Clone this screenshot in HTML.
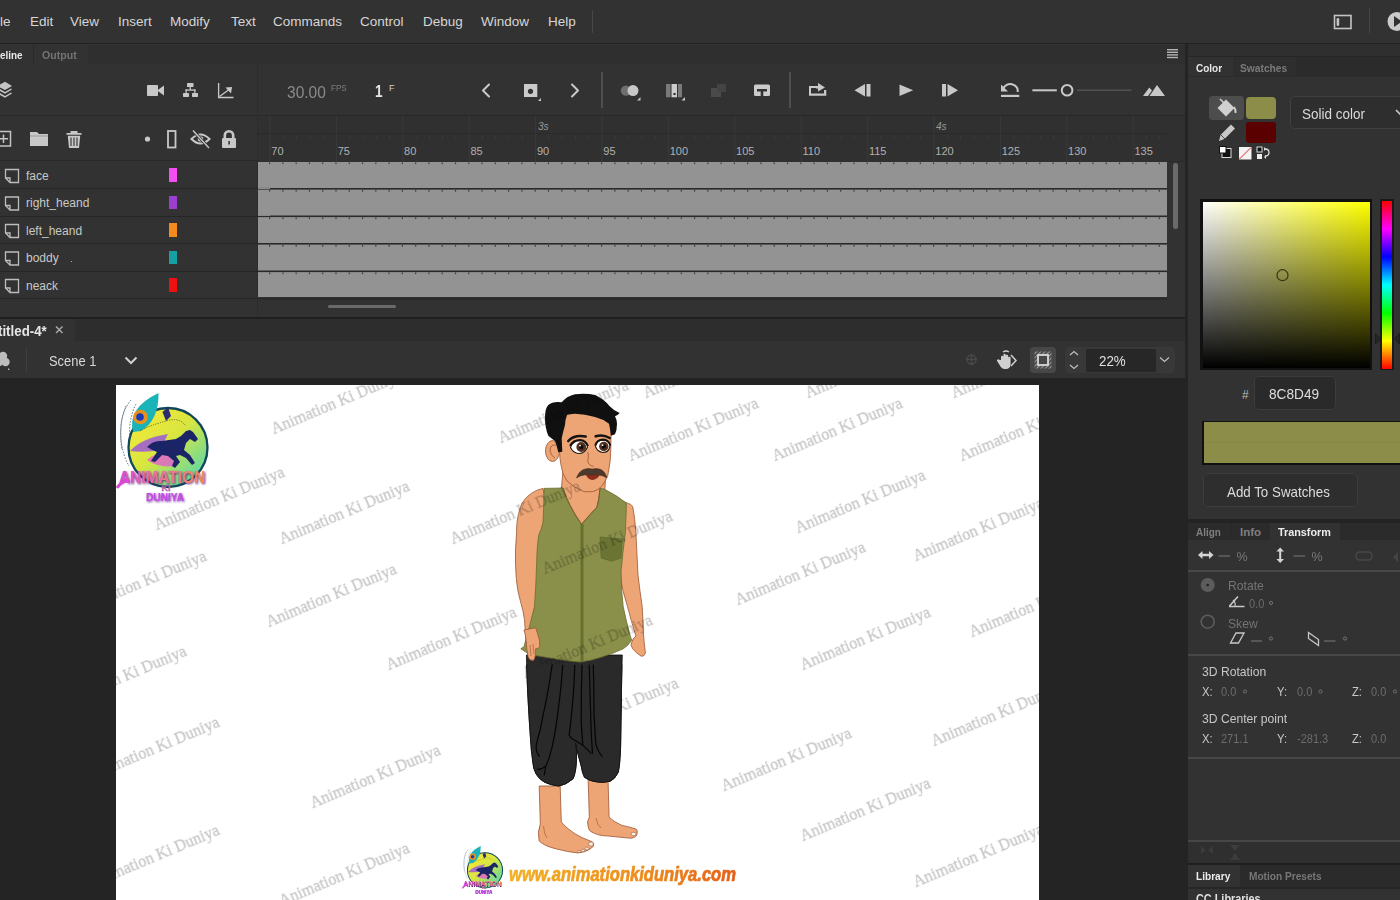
<!DOCTYPE html><html><head><meta charset="utf-8"><style>
*{margin:0;padding:0;box-sizing:border-box}
html,body{width:1400px;height:900px;overflow:hidden;background:#262626;font-family:"Liberation Sans",sans-serif;color:#cfcfcf}
.a{position:absolute}
.t{position:absolute;white-space:nowrap;line-height:1}
svg{position:absolute;overflow:visible}
.ic{fill:#c9c9c9}
.mn{top:15px;font-size:13.5px;color:#d6d6d6}
.rl{top:146px;font-size:11px;color:#b0b0b0}
.ln{font-size:12px;color:#c8c8c8}
.wm{position:absolute;white-space:nowrap;line-height:1;font-family:"Liberation Serif",serif;font-size:16px;color:rgba(0,0,0,0.2);-webkit-text-stroke:0.4px rgba(0,0,0,0.16);transform-origin:0 100%;transform:rotate(-22.8deg);will-change:transform}
</style></head><body><div class="a" style="left:0px;top:0px;width:1400px;height:43px;background:#323232;"></div>
<div class="t mn" style="left:0px">le</div>
<div class="t mn" style="left:30px">Edit</div>
<div class="t mn" style="left:70px">View</div>
<div class="t mn" style="left:118px">Insert</div>
<div class="t mn" style="left:170px">Modify</div>
<div class="t mn" style="left:231px">Text</div>
<div class="t mn" style="left:273px">Commands</div>
<div class="t mn" style="left:360px">Control</div>
<div class="t mn" style="left:423px">Debug</div>
<div class="t mn" style="left:481px">Window</div>
<div class="t mn" style="left:548px">Help</div>
<div class="a" style="left:592px;top:10px;width:1px;height:23px;background:#474747;"></div>
<div class="a" style="left:0px;top:43px;width:1400px;height:2px;background:#222222;"></div>
<svg style="left:0;top:0" width="1400" height="44"><rect x="1334.5" y="15.5" width="16.5" height="13" fill="none" stroke="#c4c4c4" stroke-width="1.6"/><rect x="1336.6" y="18" width="2.6" height="8" rx="1.3" fill="#c4c4c4"/><circle cx="1397" cy="21.5" r="9.5" fill="#cacaca"/><path d="M1394 16 L1402 21.5 L1394 27Z" fill="#323232"/></svg>
<div class="a" style="left:1369px;top:8px;width:1px;height:25px;background:#464646;"></div>
<div class="a" style="left:0px;top:44px;width:1185px;height:273px;background:#323232;"></div>
<div class="a" style="left:88px;top:45px;width:1097px;height:19px;background:#2f2f2f;"></div>
<div class="a" style="left:33px;top:44px;width:1px;height:20px;background:#2a2a2a;"></div>
<div class="t" style="left:-0.5px;top:49.5px;font-size:11.5px;color:#e8e8e8;font-weight:bold;transform:scaleX(0.86);transform-origin:0 0">eline</div>
<div class="t" style="left:42px;top:49.5px;font-size:11.5px;color:#737373;font-weight:bold;transform:scaleX(0.92);transform-origin:0 0">Output</div>
<svg style="left:0;top:0" width="1" height="1"><g fill="#b4b4b4"><rect x="1167" y="49" width="11" height="1.4"/><rect x="1167" y="51.6" width="11" height="1.4"/><rect x="1167" y="54.2" width="11" height="1.4"/><rect x="1167" y="56.8" width="11" height="1.4"/></g></svg>
<div class="a" style="left:0px;top:115px;width:1185px;height:1px;background:#2a2a2a;"></div>
<div class="a" style="left:0px;top:160px;width:258px;height:1px;background:#2a2a2a;"></div>
<div class="a" style="left:257px;top:64px;width:1px;height:253px;background:#2c2c2c;"></div>
<svg style="left:0;top:0" width="1" height="1"><g fill="#c4c4c4"><path d="M-3 86 L5 81.8 L12 86 L5 90Z"/><path d="M-3 89.5 L-1 88.5 L5 92 L11 88.5 L12 89.5 L5 93.8Z"/><path d="M-3 93.5 L-1 92.5 L5 96 L11 92.5 L12 93.5 L5 97.8Z"/></g></svg>
<svg style="left:0;top:0" width="1" height="1"><g fill="#c8c8c8"><rect x="147" y="85" width="11" height="11" rx="0.8"/><path d="M157 90.5 L164 85.5 L164 95.5Z"/><rect x="187" y="83" width="6.5" height="4" rx="0.6"/><rect x="189.6" y="86.5" width="1.3" height="3.5"/><rect x="185.5" y="89.4" width="10" height="1.3"/><rect x="185.5" y="89.4" width="1.3" height="3.5"/><rect x="194.2" y="89.4" width="1.3" height="3.5"/><rect x="183" y="92.9" width="6" height="4" rx="0.6"/><rect x="192" y="92.9" width="6" height="4" rx="0.6"/></g><g stroke="#c8c8c8" stroke-width="1.3" fill="none"><path d="M218.6 83 V97.5 H233.5"/><path d="M219.5 96.5 L230.5 88.5"/></g><path d="M225.5 87.5 L232 87 L231 93.5Z" fill="#c8c8c8"/></svg>
<div class="t" style="left:287px;top:84px;font-size:16.5px;color:#8a8a8a;transform:scaleX(0.94);transform-origin:0 0">30.00</div>
<div class="t" style="left:331px;top:83.5px;font-size:9px;color:#7d7d7d;transform:scaleX(0.9);transform-origin:0 0">FPS</div>
<div class="t" style="left:375px;top:84px;font-size:16px;color:#e6e6e6;font-weight:bold;transform:scaleX(0.85);transform-origin:0 0">1</div>
<div class="t" style="left:389px;top:83.5px;font-size:9px;color:#d0d0d0;">F</div>
<svg style="left:0;top:0" width="1" height="1"><g stroke="#cacaca" stroke-width="2" fill="none" stroke-linecap="round" stroke-linejoin="round"><path d="M489 84.5 L483 90.5 L489 96.5"/><path d="M572 84.5 L578 90.5 L572 96.5"/></g><rect x="524" y="84" width="13.3" height="13" fill="#cacaca"/><circle cx="530.5" cy="91.3" r="2.6" fill="#323232"/><path d="M541 98 L541 101 L538 101Z" fill="#cacaca"/></svg>
<div class="a" style="left:601px;top:72px;width:1.5px;height:36px;background:#4f4f4f;"></div>
<svg style="left:0;top:0" width="1" height="1"><circle cx="626" cy="90.6" r="5.2" fill="#6f6f6f"/><circle cx="633" cy="90.6" r="5.5" fill="#c8c8c8"/><path d="M640.5 97 L640.5 100.5 L637 100.5Z" fill="#c8c8c8"/><rect x="666" y="84" width="4.5" height="13.3" fill="#7a7a7a"/><rect x="671.5" y="84" width="5.5" height="13.3" fill="#cccccc"/><rect x="678" y="84" width="4" height="13.3" fill="#7a7a7a"/><rect x="673.5" y="93" width="2" height="2" fill="#222"/><path d="M685 97 L685 100.5 L681.5 100.5Z" fill="#c8c8c8"/><rect x="711" y="88" width="10" height="9" fill="#4a4a4a"/><rect x="717" y="84" width="9" height="8" fill="#444"/><rect x="754" y="84.5" width="16" height="11.5" rx="1.5" fill="#cccccc"/><path d="M757 89 H767 V91.5 H763.3 V96 H760.7 V91.5 H757Z" fill="#323232"/></svg>
<div class="a" style="left:789px;top:72px;width:1.5px;height:36px;background:#4f4f4f;"></div>
<svg style="left:0;top:0" width="1" height="1"><g fill="#c8c8c8"><path d="M809 86 H819 V88 H811 V93.5 H824 V90 H826.3 V95.7 H809Z"/><path d="M818 83 L825 87.5 L818 91.5Z"/><rect x="816" y="86.5" width="4" height="2"/><path d="M865 84 L865 96.5 L854.5 90.2Z"/><rect x="866.5" y="84" width="4" height="12.5"/><path d="M899.5 84.4 L913.2 90.2 L899.5 96Z"/><rect x="942" y="84" width="4" height="12.5"/><path d="M947.5 84 L947.5 96.5 L958 90.2Z"/></g></svg>
<svg style="left:0;top:0" width="1" height="1"><path d="M1003 89 A7 6 0 1 1 1017.5 92" stroke="#c8c8c8" stroke-width="2" fill="none"/><path d="M1001 84.5 L1001 91.5 L1008 91.5Z" fill="#c8c8c8"/><rect x="1001" y="94.8" width="18.3" height="2.2" fill="#c8c8c8"/><rect x="1032.4" y="89.3" width="24.4" height="2" fill="#c8c8c8"/><circle cx="1067.1" cy="90.3" r="5.3" stroke="#c8c8c8" stroke-width="2" fill="none"/><rect x="1077" y="89.5" width="54.4" height="1.4" fill="#555"/><path d="M1143 96 L1149.3 87.5 L1152 90.5 L1148 96Z" fill="#c8c8c8"/><path d="M1149.5 96 L1157 85 L1165 96Z" fill="#c8c8c8"/></svg>
<svg style="left:0;top:0" width="1" height="1"><rect x="-4" y="131.5" width="14.5" height="14.5" fill="none" stroke="#c4c4c4" stroke-width="1.5"/><path d="M3.5 134.5 V143 M-1 138.8 H8" stroke="#c4c4c4" stroke-width="1.5"/><path d="M30 132 H37 L39 134 H48 V146 H30Z" fill="#c8c8c8"/><rect x="30" y="135.5" width="18" height="1" fill="#9a9a9a"/><path d="M66.5 133 H81.5 V134.8 H66.5Z M70.5 131 H77.5 V133 H70.5Z" fill="#c8c8c8"/><path d="M67.8 135.8 H80.2 L79 148 H69Z" fill="#c8c8c8"/><path d="M71 137.5 V146 M74 137.5 V146 M77 137.5 V146" stroke="#323232" stroke-width="1.1"/><circle cx="147.5" cy="139" r="2.6" fill="#c8c8c8"/><rect x="168" y="131" width="7.5" height="16.5" fill="none" stroke="#c8c8c8" stroke-width="1.8"/><path d="M191.5 139 Q200.5 130 209.5 139 Q200.5 148 191.5 139Z" fill="none" stroke="#c8c8c8" stroke-width="2"/><circle cx="200.5" cy="139" r="2.8" fill="#c8c8c8"/><path d="M193 130.5 L209 148" stroke="#323232" stroke-width="3"/><path d="M193 130.5 L209 148" stroke="#c8c8c8" stroke-width="1.4"/><path d="M224.8 138 V135.5 A4.2 4.2 0 0 1 233.2 135.5 V138" fill="none" stroke="#c8c8c8" stroke-width="2.6"/><rect x="222" y="138" width="14" height="10" rx="1" fill="#c8c8c8"/><rect x="228.3" y="141" width="1.6" height="3.5" fill="#323232"/></svg>
<div class="a" style="left:258px;top:116px;width:927px;height:46px;background:#303030;"></div>
<svg style="left:0;top:0" width="1" height="1"><rect x="269.50" y="116" width="1" height="46" fill="#3a3a3a"/><rect x="282.78" y="135.5" width="1" height="4" fill="#3a3a3a"/><rect x="296.06" y="135.5" width="1" height="4" fill="#3a3a3a"/><rect x="309.34" y="135.5" width="1" height="4" fill="#3a3a3a"/><rect x="322.62" y="135.5" width="1" height="4" fill="#3a3a3a"/><rect x="335.90" y="116" width="1" height="46" fill="#3a3a3a"/><rect x="349.18" y="135.5" width="1" height="4" fill="#3a3a3a"/><rect x="362.46" y="135.5" width="1" height="4" fill="#3a3a3a"/><rect x="375.74" y="135.5" width="1" height="4" fill="#3a3a3a"/><rect x="389.02" y="135.5" width="1" height="4" fill="#3a3a3a"/><rect x="402.30" y="116" width="1" height="46" fill="#3a3a3a"/><rect x="415.58" y="135.5" width="1" height="4" fill="#3a3a3a"/><rect x="428.86" y="135.5" width="1" height="4" fill="#3a3a3a"/><rect x="442.14" y="135.5" width="1" height="4" fill="#3a3a3a"/><rect x="455.42" y="135.5" width="1" height="4" fill="#3a3a3a"/><rect x="468.70" y="116" width="1" height="46" fill="#3a3a3a"/><rect x="481.98" y="135.5" width="1" height="4" fill="#3a3a3a"/><rect x="495.26" y="135.5" width="1" height="4" fill="#3a3a3a"/><rect x="508.54" y="135.5" width="1" height="4" fill="#3a3a3a"/><rect x="521.82" y="135.5" width="1" height="4" fill="#3a3a3a"/><rect x="535.10" y="116" width="1" height="46" fill="#3a3a3a"/><rect x="548.38" y="135.5" width="1" height="4" fill="#3a3a3a"/><rect x="561.66" y="135.5" width="1" height="4" fill="#3a3a3a"/><rect x="574.94" y="135.5" width="1" height="4" fill="#3a3a3a"/><rect x="588.22" y="135.5" width="1" height="4" fill="#3a3a3a"/><rect x="601.50" y="116" width="1" height="46" fill="#3a3a3a"/><rect x="614.78" y="135.5" width="1" height="4" fill="#3a3a3a"/><rect x="628.06" y="135.5" width="1" height="4" fill="#3a3a3a"/><rect x="641.34" y="135.5" width="1" height="4" fill="#3a3a3a"/><rect x="654.62" y="135.5" width="1" height="4" fill="#3a3a3a"/><rect x="667.90" y="116" width="1" height="46" fill="#3a3a3a"/><rect x="681.18" y="135.5" width="1" height="4" fill="#3a3a3a"/><rect x="694.46" y="135.5" width="1" height="4" fill="#3a3a3a"/><rect x="707.74" y="135.5" width="1" height="4" fill="#3a3a3a"/><rect x="721.02" y="135.5" width="1" height="4" fill="#3a3a3a"/><rect x="734.30" y="116" width="1" height="46" fill="#3a3a3a"/><rect x="747.58" y="135.5" width="1" height="4" fill="#3a3a3a"/><rect x="760.86" y="135.5" width="1" height="4" fill="#3a3a3a"/><rect x="774.14" y="135.5" width="1" height="4" fill="#3a3a3a"/><rect x="787.42" y="135.5" width="1" height="4" fill="#3a3a3a"/><rect x="800.70" y="116" width="1" height="46" fill="#3a3a3a"/><rect x="813.98" y="135.5" width="1" height="4" fill="#3a3a3a"/><rect x="827.26" y="135.5" width="1" height="4" fill="#3a3a3a"/><rect x="840.54" y="135.5" width="1" height="4" fill="#3a3a3a"/><rect x="853.82" y="135.5" width="1" height="4" fill="#3a3a3a"/><rect x="867.10" y="116" width="1" height="46" fill="#3a3a3a"/><rect x="880.38" y="135.5" width="1" height="4" fill="#3a3a3a"/><rect x="893.66" y="135.5" width="1" height="4" fill="#3a3a3a"/><rect x="906.94" y="135.5" width="1" height="4" fill="#3a3a3a"/><rect x="920.22" y="135.5" width="1" height="4" fill="#3a3a3a"/><rect x="933.50" y="116" width="1" height="46" fill="#3a3a3a"/><rect x="946.78" y="135.5" width="1" height="4" fill="#3a3a3a"/><rect x="960.06" y="135.5" width="1" height="4" fill="#3a3a3a"/><rect x="973.34" y="135.5" width="1" height="4" fill="#3a3a3a"/><rect x="986.62" y="135.5" width="1" height="4" fill="#3a3a3a"/><rect x="999.90" y="116" width="1" height="46" fill="#3a3a3a"/><rect x="1013.18" y="135.5" width="1" height="4" fill="#3a3a3a"/><rect x="1026.46" y="135.5" width="1" height="4" fill="#3a3a3a"/><rect x="1039.74" y="135.5" width="1" height="4" fill="#3a3a3a"/><rect x="1053.02" y="135.5" width="1" height="4" fill="#3a3a3a"/><rect x="1066.30" y="116" width="1" height="46" fill="#3a3a3a"/><rect x="1079.58" y="135.5" width="1" height="4" fill="#3a3a3a"/><rect x="1092.86" y="135.5" width="1" height="4" fill="#3a3a3a"/><rect x="1106.14" y="135.5" width="1" height="4" fill="#3a3a3a"/><rect x="1119.42" y="135.5" width="1" height="4" fill="#3a3a3a"/><rect x="1132.70" y="116" width="1" height="46" fill="#3a3a3a"/><rect x="1145.98" y="135.5" width="1" height="4" fill="#3a3a3a"/><rect x="1159.26" y="135.5" width="1" height="4" fill="#3a3a3a"/></svg>
<div class="a" style="left:258px;top:133px;width:909px;height:1px;background:#2a2a2a;"></div>
<div class="t rl" style="left:271.3px">70</div>
<div class="t rl" style="left:337.7px">75</div>
<div class="t rl" style="left:404.1px">80</div>
<div class="t rl" style="left:470.5px">85</div>
<div class="t rl" style="left:536.9px">90</div>
<div class="t rl" style="left:603.3px">95</div>
<div class="t rl" style="left:669.7px">100</div>
<div class="t rl" style="left:736.1px">105</div>
<div class="t rl" style="left:802.5px">110</div>
<div class="t rl" style="left:868.9px">115</div>
<div class="t rl" style="left:935.3px">120</div>
<div class="t rl" style="left:1001.7px">125</div>
<div class="t rl" style="left:1068.1px">130</div>
<div class="t rl" style="left:1134.5px">135</div>
<div class="t" style="left:538px;top:122px;font-size:10px;color:#9a9a9a;font-style:italic">3s</div>
<div class="t" style="left:936px;top:122px;font-size:10px;color:#9a9a9a;font-style:italic">4s</div>
<div class="a" style="left:0px;top:188px;width:258px;height:1.3px;background:#262626;"></div>
<svg style="left:0;top:0" width="1" height="1"><path d="M5.5 169.5 H18.5 V182.5 H10 L5.5 178Z" fill="none" stroke="#bdbdbd" stroke-width="1.3"/><path d="M5.5 178 H10 V182.5" fill="none" stroke="#bdbdbd" stroke-width="1.3"/></svg>
<div class="t" style="left:26px;top:169.5px;font-size:12px;color:#c8c8c8;">face</div>
<div class="a" style="left:169px;top:168px;width:7.5px;height:13.5px;background:#f34ef3;"></div>
<div class="a" style="left:0px;top:215.5px;width:258px;height:1.3px;background:#262626;"></div>
<svg style="left:0;top:0" width="1" height="1"><path d="M5.5 197.0 H18.5 V210.0 H10 L5.5 205.5Z" fill="none" stroke="#bdbdbd" stroke-width="1.3"/><path d="M5.5 205.5 H10 V210.0" fill="none" stroke="#bdbdbd" stroke-width="1.3"/></svg>
<div class="t" style="left:26px;top:197.0px;font-size:12px;color:#c8c8c8;">right_heand</div>
<div class="a" style="left:169px;top:195.5px;width:7.5px;height:13.5px;background:#9b3fd0;"></div>
<div class="a" style="left:0px;top:243px;width:258px;height:1.3px;background:#262626;"></div>
<svg style="left:0;top:0" width="1" height="1"><path d="M5.5 224.5 H18.5 V237.5 H10 L5.5 233Z" fill="none" stroke="#bdbdbd" stroke-width="1.3"/><path d="M5.5 233 H10 V237.5" fill="none" stroke="#bdbdbd" stroke-width="1.3"/></svg>
<div class="t" style="left:26px;top:224.5px;font-size:12px;color:#c8c8c8;">left_heand</div>
<div class="a" style="left:169px;top:223px;width:7.5px;height:13.5px;background:#f38a1d;"></div>
<div class="a" style="left:0px;top:270.5px;width:258px;height:1.3px;background:#262626;"></div>
<svg style="left:0;top:0" width="1" height="1"><path d="M5.5 252.0 H18.5 V265.0 H10 L5.5 260.5Z" fill="none" stroke="#bdbdbd" stroke-width="1.3"/><path d="M5.5 260.5 H10 V265.0" fill="none" stroke="#bdbdbd" stroke-width="1.3"/></svg>
<div class="t" style="left:26px;top:252.0px;font-size:12px;color:#c8c8c8;">boddy</div>
<div class="a" style="left:169px;top:250.5px;width:7.5px;height:13.5px;background:#16a0a3;"></div>
<div class="a" style="left:0px;top:298px;width:258px;height:1.3px;background:#262626;"></div>
<svg style="left:0;top:0" width="1" height="1"><path d="M5.5 279.5 H18.5 V292.5 H10 L5.5 288Z" fill="none" stroke="#bdbdbd" stroke-width="1.3"/><path d="M5.5 288 H10 V292.5" fill="none" stroke="#bdbdbd" stroke-width="1.3"/></svg>
<div class="t" style="left:26px;top:279.5px;font-size:12px;color:#c8c8c8;">neack</div>
<div class="a" style="left:169px;top:278px;width:7.5px;height:13.5px;background:#ee1111;"></div>
<div class="a" style="left:70.5px;top:260.5px;width:1.5px;height:1.5px;background:#aaa;"></div>
<div class="a" style="left:258px;top:162px;width:909px;height:135px;background:#939393;"></div>
<svg style="left:0;top:0" width="1" height="1"><rect x="258" y="188" width="909" height="1.6" fill="#2a2a2a"/><rect x="269.00" y="162.5" width="1.2" height="1.6" fill="#3a3a3a"/><rect x="282.28" y="162.5" width="1.2" height="1.6" fill="#3a3a3a"/><rect x="295.56" y="162.5" width="1.2" height="1.6" fill="#3a3a3a"/><rect x="308.84" y="162.5" width="1.2" height="1.6" fill="#3a3a3a"/><rect x="322.12" y="162.5" width="1.2" height="1.6" fill="#3a3a3a"/><rect x="335.40" y="162.5" width="1.2" height="1.6" fill="#3a3a3a"/><rect x="348.68" y="162.5" width="1.2" height="1.6" fill="#3a3a3a"/><rect x="361.96" y="162.5" width="1.2" height="1.6" fill="#3a3a3a"/><rect x="375.24" y="162.5" width="1.2" height="1.6" fill="#3a3a3a"/><rect x="388.52" y="162.5" width="1.2" height="1.6" fill="#3a3a3a"/><rect x="401.80" y="162.5" width="1.2" height="1.6" fill="#3a3a3a"/><rect x="415.08" y="162.5" width="1.2" height="1.6" fill="#3a3a3a"/><rect x="428.36" y="162.5" width="1.2" height="1.6" fill="#3a3a3a"/><rect x="441.64" y="162.5" width="1.2" height="1.6" fill="#3a3a3a"/><rect x="454.92" y="162.5" width="1.2" height="1.6" fill="#3a3a3a"/><rect x="468.20" y="162.5" width="1.2" height="1.6" fill="#3a3a3a"/><rect x="481.48" y="162.5" width="1.2" height="1.6" fill="#3a3a3a"/><rect x="494.76" y="162.5" width="1.2" height="1.6" fill="#3a3a3a"/><rect x="508.04" y="162.5" width="1.2" height="1.6" fill="#3a3a3a"/><rect x="521.32" y="162.5" width="1.2" height="1.6" fill="#3a3a3a"/><rect x="534.60" y="162.5" width="1.2" height="1.6" fill="#3a3a3a"/><rect x="547.88" y="162.5" width="1.2" height="1.6" fill="#3a3a3a"/><rect x="561.16" y="162.5" width="1.2" height="1.6" fill="#3a3a3a"/><rect x="574.44" y="162.5" width="1.2" height="1.6" fill="#3a3a3a"/><rect x="587.72" y="162.5" width="1.2" height="1.6" fill="#3a3a3a"/><rect x="601.00" y="162.5" width="1.2" height="1.6" fill="#3a3a3a"/><rect x="614.28" y="162.5" width="1.2" height="1.6" fill="#3a3a3a"/><rect x="627.56" y="162.5" width="1.2" height="1.6" fill="#3a3a3a"/><rect x="640.84" y="162.5" width="1.2" height="1.6" fill="#3a3a3a"/><rect x="654.12" y="162.5" width="1.2" height="1.6" fill="#3a3a3a"/><rect x="667.40" y="162.5" width="1.2" height="1.6" fill="#3a3a3a"/><rect x="680.68" y="162.5" width="1.2" height="1.6" fill="#3a3a3a"/><rect x="693.96" y="162.5" width="1.2" height="1.6" fill="#3a3a3a"/><rect x="707.24" y="162.5" width="1.2" height="1.6" fill="#3a3a3a"/><rect x="720.52" y="162.5" width="1.2" height="1.6" fill="#3a3a3a"/><rect x="733.80" y="162.5" width="1.2" height="1.6" fill="#3a3a3a"/><rect x="747.08" y="162.5" width="1.2" height="1.6" fill="#3a3a3a"/><rect x="760.36" y="162.5" width="1.2" height="1.6" fill="#3a3a3a"/><rect x="773.64" y="162.5" width="1.2" height="1.6" fill="#3a3a3a"/><rect x="786.92" y="162.5" width="1.2" height="1.6" fill="#3a3a3a"/><rect x="800.20" y="162.5" width="1.2" height="1.6" fill="#3a3a3a"/><rect x="813.48" y="162.5" width="1.2" height="1.6" fill="#3a3a3a"/><rect x="826.76" y="162.5" width="1.2" height="1.6" fill="#3a3a3a"/><rect x="840.04" y="162.5" width="1.2" height="1.6" fill="#3a3a3a"/><rect x="853.32" y="162.5" width="1.2" height="1.6" fill="#3a3a3a"/><rect x="866.60" y="162.5" width="1.2" height="1.6" fill="#3a3a3a"/><rect x="879.88" y="162.5" width="1.2" height="1.6" fill="#3a3a3a"/><rect x="893.16" y="162.5" width="1.2" height="1.6" fill="#3a3a3a"/><rect x="906.44" y="162.5" width="1.2" height="1.6" fill="#3a3a3a"/><rect x="919.72" y="162.5" width="1.2" height="1.6" fill="#3a3a3a"/><rect x="933.00" y="162.5" width="1.2" height="1.6" fill="#3a3a3a"/><rect x="946.28" y="162.5" width="1.2" height="1.6" fill="#3a3a3a"/><rect x="959.56" y="162.5" width="1.2" height="1.6" fill="#3a3a3a"/><rect x="972.84" y="162.5" width="1.2" height="1.6" fill="#3a3a3a"/><rect x="986.12" y="162.5" width="1.2" height="1.6" fill="#3a3a3a"/><rect x="999.40" y="162.5" width="1.2" height="1.6" fill="#3a3a3a"/><rect x="1012.68" y="162.5" width="1.2" height="1.6" fill="#3a3a3a"/><rect x="1025.96" y="162.5" width="1.2" height="1.6" fill="#3a3a3a"/><rect x="1039.24" y="162.5" width="1.2" height="1.6" fill="#3a3a3a"/><rect x="1052.52" y="162.5" width="1.2" height="1.6" fill="#3a3a3a"/><rect x="1065.80" y="162.5" width="1.2" height="1.6" fill="#3a3a3a"/><rect x="1079.08" y="162.5" width="1.2" height="1.6" fill="#3a3a3a"/><rect x="1092.36" y="162.5" width="1.2" height="1.6" fill="#3a3a3a"/><rect x="1105.64" y="162.5" width="1.2" height="1.6" fill="#3a3a3a"/><rect x="1118.92" y="162.5" width="1.2" height="1.6" fill="#3a3a3a"/><rect x="1132.20" y="162.5" width="1.2" height="1.6" fill="#3a3a3a"/><rect x="1145.48" y="162.5" width="1.2" height="1.6" fill="#3a3a3a"/><rect x="1158.76" y="162.5" width="1.2" height="1.6" fill="#3a3a3a"/><rect x="258" y="215.5" width="909" height="1.6" fill="#2a2a2a"/><rect x="269.00" y="190.0" width="1.2" height="1.6" fill="#3a3a3a"/><rect x="282.28" y="190.0" width="1.2" height="1.6" fill="#3a3a3a"/><rect x="295.56" y="190.0" width="1.2" height="1.6" fill="#3a3a3a"/><rect x="308.84" y="190.0" width="1.2" height="1.6" fill="#3a3a3a"/><rect x="322.12" y="190.0" width="1.2" height="1.6" fill="#3a3a3a"/><rect x="335.40" y="190.0" width="1.2" height="1.6" fill="#3a3a3a"/><rect x="348.68" y="190.0" width="1.2" height="1.6" fill="#3a3a3a"/><rect x="361.96" y="190.0" width="1.2" height="1.6" fill="#3a3a3a"/><rect x="375.24" y="190.0" width="1.2" height="1.6" fill="#3a3a3a"/><rect x="388.52" y="190.0" width="1.2" height="1.6" fill="#3a3a3a"/><rect x="401.80" y="190.0" width="1.2" height="1.6" fill="#3a3a3a"/><rect x="415.08" y="190.0" width="1.2" height="1.6" fill="#3a3a3a"/><rect x="428.36" y="190.0" width="1.2" height="1.6" fill="#3a3a3a"/><rect x="441.64" y="190.0" width="1.2" height="1.6" fill="#3a3a3a"/><rect x="454.92" y="190.0" width="1.2" height="1.6" fill="#3a3a3a"/><rect x="468.20" y="190.0" width="1.2" height="1.6" fill="#3a3a3a"/><rect x="481.48" y="190.0" width="1.2" height="1.6" fill="#3a3a3a"/><rect x="494.76" y="190.0" width="1.2" height="1.6" fill="#3a3a3a"/><rect x="508.04" y="190.0" width="1.2" height="1.6" fill="#3a3a3a"/><rect x="521.32" y="190.0" width="1.2" height="1.6" fill="#3a3a3a"/><rect x="534.60" y="190.0" width="1.2" height="1.6" fill="#3a3a3a"/><rect x="547.88" y="190.0" width="1.2" height="1.6" fill="#3a3a3a"/><rect x="561.16" y="190.0" width="1.2" height="1.6" fill="#3a3a3a"/><rect x="574.44" y="190.0" width="1.2" height="1.6" fill="#3a3a3a"/><rect x="587.72" y="190.0" width="1.2" height="1.6" fill="#3a3a3a"/><rect x="601.00" y="190.0" width="1.2" height="1.6" fill="#3a3a3a"/><rect x="614.28" y="190.0" width="1.2" height="1.6" fill="#3a3a3a"/><rect x="627.56" y="190.0" width="1.2" height="1.6" fill="#3a3a3a"/><rect x="640.84" y="190.0" width="1.2" height="1.6" fill="#3a3a3a"/><rect x="654.12" y="190.0" width="1.2" height="1.6" fill="#3a3a3a"/><rect x="667.40" y="190.0" width="1.2" height="1.6" fill="#3a3a3a"/><rect x="680.68" y="190.0" width="1.2" height="1.6" fill="#3a3a3a"/><rect x="693.96" y="190.0" width="1.2" height="1.6" fill="#3a3a3a"/><rect x="707.24" y="190.0" width="1.2" height="1.6" fill="#3a3a3a"/><rect x="720.52" y="190.0" width="1.2" height="1.6" fill="#3a3a3a"/><rect x="733.80" y="190.0" width="1.2" height="1.6" fill="#3a3a3a"/><rect x="747.08" y="190.0" width="1.2" height="1.6" fill="#3a3a3a"/><rect x="760.36" y="190.0" width="1.2" height="1.6" fill="#3a3a3a"/><rect x="773.64" y="190.0" width="1.2" height="1.6" fill="#3a3a3a"/><rect x="786.92" y="190.0" width="1.2" height="1.6" fill="#3a3a3a"/><rect x="800.20" y="190.0" width="1.2" height="1.6" fill="#3a3a3a"/><rect x="813.48" y="190.0" width="1.2" height="1.6" fill="#3a3a3a"/><rect x="826.76" y="190.0" width="1.2" height="1.6" fill="#3a3a3a"/><rect x="840.04" y="190.0" width="1.2" height="1.6" fill="#3a3a3a"/><rect x="853.32" y="190.0" width="1.2" height="1.6" fill="#3a3a3a"/><rect x="866.60" y="190.0" width="1.2" height="1.6" fill="#3a3a3a"/><rect x="879.88" y="190.0" width="1.2" height="1.6" fill="#3a3a3a"/><rect x="893.16" y="190.0" width="1.2" height="1.6" fill="#3a3a3a"/><rect x="906.44" y="190.0" width="1.2" height="1.6" fill="#3a3a3a"/><rect x="919.72" y="190.0" width="1.2" height="1.6" fill="#3a3a3a"/><rect x="933.00" y="190.0" width="1.2" height="1.6" fill="#3a3a3a"/><rect x="946.28" y="190.0" width="1.2" height="1.6" fill="#3a3a3a"/><rect x="959.56" y="190.0" width="1.2" height="1.6" fill="#3a3a3a"/><rect x="972.84" y="190.0" width="1.2" height="1.6" fill="#3a3a3a"/><rect x="986.12" y="190.0" width="1.2" height="1.6" fill="#3a3a3a"/><rect x="999.40" y="190.0" width="1.2" height="1.6" fill="#3a3a3a"/><rect x="1012.68" y="190.0" width="1.2" height="1.6" fill="#3a3a3a"/><rect x="1025.96" y="190.0" width="1.2" height="1.6" fill="#3a3a3a"/><rect x="1039.24" y="190.0" width="1.2" height="1.6" fill="#3a3a3a"/><rect x="1052.52" y="190.0" width="1.2" height="1.6" fill="#3a3a3a"/><rect x="1065.80" y="190.0" width="1.2" height="1.6" fill="#3a3a3a"/><rect x="1079.08" y="190.0" width="1.2" height="1.6" fill="#3a3a3a"/><rect x="1092.36" y="190.0" width="1.2" height="1.6" fill="#3a3a3a"/><rect x="1105.64" y="190.0" width="1.2" height="1.6" fill="#3a3a3a"/><rect x="1118.92" y="190.0" width="1.2" height="1.6" fill="#3a3a3a"/><rect x="1132.20" y="190.0" width="1.2" height="1.6" fill="#3a3a3a"/><rect x="1145.48" y="190.0" width="1.2" height="1.6" fill="#3a3a3a"/><rect x="1158.76" y="190.0" width="1.2" height="1.6" fill="#3a3a3a"/><rect x="258" y="243" width="909" height="1.6" fill="#2a2a2a"/><rect x="269.00" y="217.5" width="1.2" height="1.6" fill="#3a3a3a"/><rect x="282.28" y="217.5" width="1.2" height="1.6" fill="#3a3a3a"/><rect x="295.56" y="217.5" width="1.2" height="1.6" fill="#3a3a3a"/><rect x="308.84" y="217.5" width="1.2" height="1.6" fill="#3a3a3a"/><rect x="322.12" y="217.5" width="1.2" height="1.6" fill="#3a3a3a"/><rect x="335.40" y="217.5" width="1.2" height="1.6" fill="#3a3a3a"/><rect x="348.68" y="217.5" width="1.2" height="1.6" fill="#3a3a3a"/><rect x="361.96" y="217.5" width="1.2" height="1.6" fill="#3a3a3a"/><rect x="375.24" y="217.5" width="1.2" height="1.6" fill="#3a3a3a"/><rect x="388.52" y="217.5" width="1.2" height="1.6" fill="#3a3a3a"/><rect x="401.80" y="217.5" width="1.2" height="1.6" fill="#3a3a3a"/><rect x="415.08" y="217.5" width="1.2" height="1.6" fill="#3a3a3a"/><rect x="428.36" y="217.5" width="1.2" height="1.6" fill="#3a3a3a"/><rect x="441.64" y="217.5" width="1.2" height="1.6" fill="#3a3a3a"/><rect x="454.92" y="217.5" width="1.2" height="1.6" fill="#3a3a3a"/><rect x="468.20" y="217.5" width="1.2" height="1.6" fill="#3a3a3a"/><rect x="481.48" y="217.5" width="1.2" height="1.6" fill="#3a3a3a"/><rect x="494.76" y="217.5" width="1.2" height="1.6" fill="#3a3a3a"/><rect x="508.04" y="217.5" width="1.2" height="1.6" fill="#3a3a3a"/><rect x="521.32" y="217.5" width="1.2" height="1.6" fill="#3a3a3a"/><rect x="534.60" y="217.5" width="1.2" height="1.6" fill="#3a3a3a"/><rect x="547.88" y="217.5" width="1.2" height="1.6" fill="#3a3a3a"/><rect x="561.16" y="217.5" width="1.2" height="1.6" fill="#3a3a3a"/><rect x="574.44" y="217.5" width="1.2" height="1.6" fill="#3a3a3a"/><rect x="587.72" y="217.5" width="1.2" height="1.6" fill="#3a3a3a"/><rect x="601.00" y="217.5" width="1.2" height="1.6" fill="#3a3a3a"/><rect x="614.28" y="217.5" width="1.2" height="1.6" fill="#3a3a3a"/><rect x="627.56" y="217.5" width="1.2" height="1.6" fill="#3a3a3a"/><rect x="640.84" y="217.5" width="1.2" height="1.6" fill="#3a3a3a"/><rect x="654.12" y="217.5" width="1.2" height="1.6" fill="#3a3a3a"/><rect x="667.40" y="217.5" width="1.2" height="1.6" fill="#3a3a3a"/><rect x="680.68" y="217.5" width="1.2" height="1.6" fill="#3a3a3a"/><rect x="693.96" y="217.5" width="1.2" height="1.6" fill="#3a3a3a"/><rect x="707.24" y="217.5" width="1.2" height="1.6" fill="#3a3a3a"/><rect x="720.52" y="217.5" width="1.2" height="1.6" fill="#3a3a3a"/><rect x="733.80" y="217.5" width="1.2" height="1.6" fill="#3a3a3a"/><rect x="747.08" y="217.5" width="1.2" height="1.6" fill="#3a3a3a"/><rect x="760.36" y="217.5" width="1.2" height="1.6" fill="#3a3a3a"/><rect x="773.64" y="217.5" width="1.2" height="1.6" fill="#3a3a3a"/><rect x="786.92" y="217.5" width="1.2" height="1.6" fill="#3a3a3a"/><rect x="800.20" y="217.5" width="1.2" height="1.6" fill="#3a3a3a"/><rect x="813.48" y="217.5" width="1.2" height="1.6" fill="#3a3a3a"/><rect x="826.76" y="217.5" width="1.2" height="1.6" fill="#3a3a3a"/><rect x="840.04" y="217.5" width="1.2" height="1.6" fill="#3a3a3a"/><rect x="853.32" y="217.5" width="1.2" height="1.6" fill="#3a3a3a"/><rect x="866.60" y="217.5" width="1.2" height="1.6" fill="#3a3a3a"/><rect x="879.88" y="217.5" width="1.2" height="1.6" fill="#3a3a3a"/><rect x="893.16" y="217.5" width="1.2" height="1.6" fill="#3a3a3a"/><rect x="906.44" y="217.5" width="1.2" height="1.6" fill="#3a3a3a"/><rect x="919.72" y="217.5" width="1.2" height="1.6" fill="#3a3a3a"/><rect x="933.00" y="217.5" width="1.2" height="1.6" fill="#3a3a3a"/><rect x="946.28" y="217.5" width="1.2" height="1.6" fill="#3a3a3a"/><rect x="959.56" y="217.5" width="1.2" height="1.6" fill="#3a3a3a"/><rect x="972.84" y="217.5" width="1.2" height="1.6" fill="#3a3a3a"/><rect x="986.12" y="217.5" width="1.2" height="1.6" fill="#3a3a3a"/><rect x="999.40" y="217.5" width="1.2" height="1.6" fill="#3a3a3a"/><rect x="1012.68" y="217.5" width="1.2" height="1.6" fill="#3a3a3a"/><rect x="1025.96" y="217.5" width="1.2" height="1.6" fill="#3a3a3a"/><rect x="1039.24" y="217.5" width="1.2" height="1.6" fill="#3a3a3a"/><rect x="1052.52" y="217.5" width="1.2" height="1.6" fill="#3a3a3a"/><rect x="1065.80" y="217.5" width="1.2" height="1.6" fill="#3a3a3a"/><rect x="1079.08" y="217.5" width="1.2" height="1.6" fill="#3a3a3a"/><rect x="1092.36" y="217.5" width="1.2" height="1.6" fill="#3a3a3a"/><rect x="1105.64" y="217.5" width="1.2" height="1.6" fill="#3a3a3a"/><rect x="1118.92" y="217.5" width="1.2" height="1.6" fill="#3a3a3a"/><rect x="1132.20" y="217.5" width="1.2" height="1.6" fill="#3a3a3a"/><rect x="1145.48" y="217.5" width="1.2" height="1.6" fill="#3a3a3a"/><rect x="1158.76" y="217.5" width="1.2" height="1.6" fill="#3a3a3a"/><rect x="258" y="270.5" width="909" height="1.6" fill="#2a2a2a"/><rect x="269.00" y="245.0" width="1.2" height="1.6" fill="#3a3a3a"/><rect x="282.28" y="245.0" width="1.2" height="1.6" fill="#3a3a3a"/><rect x="295.56" y="245.0" width="1.2" height="1.6" fill="#3a3a3a"/><rect x="308.84" y="245.0" width="1.2" height="1.6" fill="#3a3a3a"/><rect x="322.12" y="245.0" width="1.2" height="1.6" fill="#3a3a3a"/><rect x="335.40" y="245.0" width="1.2" height="1.6" fill="#3a3a3a"/><rect x="348.68" y="245.0" width="1.2" height="1.6" fill="#3a3a3a"/><rect x="361.96" y="245.0" width="1.2" height="1.6" fill="#3a3a3a"/><rect x="375.24" y="245.0" width="1.2" height="1.6" fill="#3a3a3a"/><rect x="388.52" y="245.0" width="1.2" height="1.6" fill="#3a3a3a"/><rect x="401.80" y="245.0" width="1.2" height="1.6" fill="#3a3a3a"/><rect x="415.08" y="245.0" width="1.2" height="1.6" fill="#3a3a3a"/><rect x="428.36" y="245.0" width="1.2" height="1.6" fill="#3a3a3a"/><rect x="441.64" y="245.0" width="1.2" height="1.6" fill="#3a3a3a"/><rect x="454.92" y="245.0" width="1.2" height="1.6" fill="#3a3a3a"/><rect x="468.20" y="245.0" width="1.2" height="1.6" fill="#3a3a3a"/><rect x="481.48" y="245.0" width="1.2" height="1.6" fill="#3a3a3a"/><rect x="494.76" y="245.0" width="1.2" height="1.6" fill="#3a3a3a"/><rect x="508.04" y="245.0" width="1.2" height="1.6" fill="#3a3a3a"/><rect x="521.32" y="245.0" width="1.2" height="1.6" fill="#3a3a3a"/><rect x="534.60" y="245.0" width="1.2" height="1.6" fill="#3a3a3a"/><rect x="547.88" y="245.0" width="1.2" height="1.6" fill="#3a3a3a"/><rect x="561.16" y="245.0" width="1.2" height="1.6" fill="#3a3a3a"/><rect x="574.44" y="245.0" width="1.2" height="1.6" fill="#3a3a3a"/><rect x="587.72" y="245.0" width="1.2" height="1.6" fill="#3a3a3a"/><rect x="601.00" y="245.0" width="1.2" height="1.6" fill="#3a3a3a"/><rect x="614.28" y="245.0" width="1.2" height="1.6" fill="#3a3a3a"/><rect x="627.56" y="245.0" width="1.2" height="1.6" fill="#3a3a3a"/><rect x="640.84" y="245.0" width="1.2" height="1.6" fill="#3a3a3a"/><rect x="654.12" y="245.0" width="1.2" height="1.6" fill="#3a3a3a"/><rect x="667.40" y="245.0" width="1.2" height="1.6" fill="#3a3a3a"/><rect x="680.68" y="245.0" width="1.2" height="1.6" fill="#3a3a3a"/><rect x="693.96" y="245.0" width="1.2" height="1.6" fill="#3a3a3a"/><rect x="707.24" y="245.0" width="1.2" height="1.6" fill="#3a3a3a"/><rect x="720.52" y="245.0" width="1.2" height="1.6" fill="#3a3a3a"/><rect x="733.80" y="245.0" width="1.2" height="1.6" fill="#3a3a3a"/><rect x="747.08" y="245.0" width="1.2" height="1.6" fill="#3a3a3a"/><rect x="760.36" y="245.0" width="1.2" height="1.6" fill="#3a3a3a"/><rect x="773.64" y="245.0" width="1.2" height="1.6" fill="#3a3a3a"/><rect x="786.92" y="245.0" width="1.2" height="1.6" fill="#3a3a3a"/><rect x="800.20" y="245.0" width="1.2" height="1.6" fill="#3a3a3a"/><rect x="813.48" y="245.0" width="1.2" height="1.6" fill="#3a3a3a"/><rect x="826.76" y="245.0" width="1.2" height="1.6" fill="#3a3a3a"/><rect x="840.04" y="245.0" width="1.2" height="1.6" fill="#3a3a3a"/><rect x="853.32" y="245.0" width="1.2" height="1.6" fill="#3a3a3a"/><rect x="866.60" y="245.0" width="1.2" height="1.6" fill="#3a3a3a"/><rect x="879.88" y="245.0" width="1.2" height="1.6" fill="#3a3a3a"/><rect x="893.16" y="245.0" width="1.2" height="1.6" fill="#3a3a3a"/><rect x="906.44" y="245.0" width="1.2" height="1.6" fill="#3a3a3a"/><rect x="919.72" y="245.0" width="1.2" height="1.6" fill="#3a3a3a"/><rect x="933.00" y="245.0" width="1.2" height="1.6" fill="#3a3a3a"/><rect x="946.28" y="245.0" width="1.2" height="1.6" fill="#3a3a3a"/><rect x="959.56" y="245.0" width="1.2" height="1.6" fill="#3a3a3a"/><rect x="972.84" y="245.0" width="1.2" height="1.6" fill="#3a3a3a"/><rect x="986.12" y="245.0" width="1.2" height="1.6" fill="#3a3a3a"/><rect x="999.40" y="245.0" width="1.2" height="1.6" fill="#3a3a3a"/><rect x="1012.68" y="245.0" width="1.2" height="1.6" fill="#3a3a3a"/><rect x="1025.96" y="245.0" width="1.2" height="1.6" fill="#3a3a3a"/><rect x="1039.24" y="245.0" width="1.2" height="1.6" fill="#3a3a3a"/><rect x="1052.52" y="245.0" width="1.2" height="1.6" fill="#3a3a3a"/><rect x="1065.80" y="245.0" width="1.2" height="1.6" fill="#3a3a3a"/><rect x="1079.08" y="245.0" width="1.2" height="1.6" fill="#3a3a3a"/><rect x="1092.36" y="245.0" width="1.2" height="1.6" fill="#3a3a3a"/><rect x="1105.64" y="245.0" width="1.2" height="1.6" fill="#3a3a3a"/><rect x="1118.92" y="245.0" width="1.2" height="1.6" fill="#3a3a3a"/><rect x="1132.20" y="245.0" width="1.2" height="1.6" fill="#3a3a3a"/><rect x="1145.48" y="245.0" width="1.2" height="1.6" fill="#3a3a3a"/><rect x="1158.76" y="245.0" width="1.2" height="1.6" fill="#3a3a3a"/><rect x="258" y="298" width="909" height="1.6" fill="#2a2a2a"/><rect x="269.00" y="272.5" width="1.2" height="1.6" fill="#3a3a3a"/><rect x="282.28" y="272.5" width="1.2" height="1.6" fill="#3a3a3a"/><rect x="295.56" y="272.5" width="1.2" height="1.6" fill="#3a3a3a"/><rect x="308.84" y="272.5" width="1.2" height="1.6" fill="#3a3a3a"/><rect x="322.12" y="272.5" width="1.2" height="1.6" fill="#3a3a3a"/><rect x="335.40" y="272.5" width="1.2" height="1.6" fill="#3a3a3a"/><rect x="348.68" y="272.5" width="1.2" height="1.6" fill="#3a3a3a"/><rect x="361.96" y="272.5" width="1.2" height="1.6" fill="#3a3a3a"/><rect x="375.24" y="272.5" width="1.2" height="1.6" fill="#3a3a3a"/><rect x="388.52" y="272.5" width="1.2" height="1.6" fill="#3a3a3a"/><rect x="401.80" y="272.5" width="1.2" height="1.6" fill="#3a3a3a"/><rect x="415.08" y="272.5" width="1.2" height="1.6" fill="#3a3a3a"/><rect x="428.36" y="272.5" width="1.2" height="1.6" fill="#3a3a3a"/><rect x="441.64" y="272.5" width="1.2" height="1.6" fill="#3a3a3a"/><rect x="454.92" y="272.5" width="1.2" height="1.6" fill="#3a3a3a"/><rect x="468.20" y="272.5" width="1.2" height="1.6" fill="#3a3a3a"/><rect x="481.48" y="272.5" width="1.2" height="1.6" fill="#3a3a3a"/><rect x="494.76" y="272.5" width="1.2" height="1.6" fill="#3a3a3a"/><rect x="508.04" y="272.5" width="1.2" height="1.6" fill="#3a3a3a"/><rect x="521.32" y="272.5" width="1.2" height="1.6" fill="#3a3a3a"/><rect x="534.60" y="272.5" width="1.2" height="1.6" fill="#3a3a3a"/><rect x="547.88" y="272.5" width="1.2" height="1.6" fill="#3a3a3a"/><rect x="561.16" y="272.5" width="1.2" height="1.6" fill="#3a3a3a"/><rect x="574.44" y="272.5" width="1.2" height="1.6" fill="#3a3a3a"/><rect x="587.72" y="272.5" width="1.2" height="1.6" fill="#3a3a3a"/><rect x="601.00" y="272.5" width="1.2" height="1.6" fill="#3a3a3a"/><rect x="614.28" y="272.5" width="1.2" height="1.6" fill="#3a3a3a"/><rect x="627.56" y="272.5" width="1.2" height="1.6" fill="#3a3a3a"/><rect x="640.84" y="272.5" width="1.2" height="1.6" fill="#3a3a3a"/><rect x="654.12" y="272.5" width="1.2" height="1.6" fill="#3a3a3a"/><rect x="667.40" y="272.5" width="1.2" height="1.6" fill="#3a3a3a"/><rect x="680.68" y="272.5" width="1.2" height="1.6" fill="#3a3a3a"/><rect x="693.96" y="272.5" width="1.2" height="1.6" fill="#3a3a3a"/><rect x="707.24" y="272.5" width="1.2" height="1.6" fill="#3a3a3a"/><rect x="720.52" y="272.5" width="1.2" height="1.6" fill="#3a3a3a"/><rect x="733.80" y="272.5" width="1.2" height="1.6" fill="#3a3a3a"/><rect x="747.08" y="272.5" width="1.2" height="1.6" fill="#3a3a3a"/><rect x="760.36" y="272.5" width="1.2" height="1.6" fill="#3a3a3a"/><rect x="773.64" y="272.5" width="1.2" height="1.6" fill="#3a3a3a"/><rect x="786.92" y="272.5" width="1.2" height="1.6" fill="#3a3a3a"/><rect x="800.20" y="272.5" width="1.2" height="1.6" fill="#3a3a3a"/><rect x="813.48" y="272.5" width="1.2" height="1.6" fill="#3a3a3a"/><rect x="826.76" y="272.5" width="1.2" height="1.6" fill="#3a3a3a"/><rect x="840.04" y="272.5" width="1.2" height="1.6" fill="#3a3a3a"/><rect x="853.32" y="272.5" width="1.2" height="1.6" fill="#3a3a3a"/><rect x="866.60" y="272.5" width="1.2" height="1.6" fill="#3a3a3a"/><rect x="879.88" y="272.5" width="1.2" height="1.6" fill="#3a3a3a"/><rect x="893.16" y="272.5" width="1.2" height="1.6" fill="#3a3a3a"/><rect x="906.44" y="272.5" width="1.2" height="1.6" fill="#3a3a3a"/><rect x="919.72" y="272.5" width="1.2" height="1.6" fill="#3a3a3a"/><rect x="933.00" y="272.5" width="1.2" height="1.6" fill="#3a3a3a"/><rect x="946.28" y="272.5" width="1.2" height="1.6" fill="#3a3a3a"/><rect x="959.56" y="272.5" width="1.2" height="1.6" fill="#3a3a3a"/><rect x="972.84" y="272.5" width="1.2" height="1.6" fill="#3a3a3a"/><rect x="986.12" y="272.5" width="1.2" height="1.6" fill="#3a3a3a"/><rect x="999.40" y="272.5" width="1.2" height="1.6" fill="#3a3a3a"/><rect x="1012.68" y="272.5" width="1.2" height="1.6" fill="#3a3a3a"/><rect x="1025.96" y="272.5" width="1.2" height="1.6" fill="#3a3a3a"/><rect x="1039.24" y="272.5" width="1.2" height="1.6" fill="#3a3a3a"/><rect x="1052.52" y="272.5" width="1.2" height="1.6" fill="#3a3a3a"/><rect x="1065.80" y="272.5" width="1.2" height="1.6" fill="#3a3a3a"/><rect x="1079.08" y="272.5" width="1.2" height="1.6" fill="#3a3a3a"/><rect x="1092.36" y="272.5" width="1.2" height="1.6" fill="#3a3a3a"/><rect x="1105.64" y="272.5" width="1.2" height="1.6" fill="#3a3a3a"/><rect x="1118.92" y="272.5" width="1.2" height="1.6" fill="#3a3a3a"/><rect x="1132.20" y="272.5" width="1.2" height="1.6" fill="#3a3a3a"/><rect x="1145.48" y="272.5" width="1.2" height="1.6" fill="#3a3a3a"/><rect x="1158.76" y="272.5" width="1.2" height="1.6" fill="#3a3a3a"/></svg>
<div class="a" style="left:258px;top:187px;width:12px;height:1.5px;background:#8a8a8a;"></div>
<div class="a" style="left:258px;top:214.5px;width:12px;height:1.5px;background:#8a8a8a;"></div>
<div class="a" style="left:1167px;top:162px;width:18px;height:135px;background:#323232;"></div>
<div class="a" style="left:1167px;top:160.5px;width:18px;height:1.5px;background:#2a2a2a;"></div>
<div class="a" style="left:1173px;top:163px;width:5px;height:66px;background:#6a6a6a;border-radius:2.5px"></div>
<div class="a" style="left:328px;top:304.5px;width:68px;height:3.5px;background:#6a6a6a;border-radius:2px"></div>
<div class="a" style="left:0px;top:317px;width:1185px;height:2px;background:#1f1f1f;"></div>
<div class="a" style="left:1185px;top:44px;width:3px;height:856px;background:#242424;"></div>
<div class="a" style="left:0px;top:319px;width:1185px;height:22px;background:#2d2d2d;"></div>
<div class="a" style="left:0px;top:319px;width:75px;height:22px;background:#323232;"></div>
<div class="t" style="left:-2.5px;top:323.5px;font-size:14px;color:#e6e6e6;font-weight:bold;transform:scaleX(0.95);transform-origin:0 0">titled-4*</div>
<svg style="left:0;top:0" width="1" height="1"><path d="M56 326.5 L62.5 333 M62.5 326.5 L56 333" stroke="#a8a8a8" stroke-width="1.5"/></svg>
<div class="a" style="left:0px;top:341px;width:1185px;height:37px;background:#323232;"></div>
<div class="a" style="left:0px;top:378px;width:1185px;height:6px;background:#232323;"></div>
<div class="a" style="left:26px;top:348px;width:1px;height:24px;background:#3f3f3f;"></div>
<svg style="left:0;top:0" width="1" height="1"><g fill="#bdbdbd"><circle cx="3" cy="356" r="4.2"/><circle cx="-1" cy="362" r="4.2"/><circle cx="5.5" cy="362" r="4.2"/><path d="M8 368 L10 370 L8 370Z"/></g></svg>
<div class="t" style="left:48.5px;top:353.5px;font-size:14.5px;color:#d8d8d8;transform:scaleX(0.89);transform-origin:0 0">Scene 1</div>
<svg style="left:0;top:0" width="1" height="1"><path d="M125.5 357.5 L131 363 L136.5 357.5" stroke="#d0d0d0" stroke-width="2" fill="none"/></svg>
<svg style="left:0;top:0" width="1" height="1"><g stroke="#4a4a4a" stroke-width="1.3" fill="none"><circle cx="971.5" cy="359.5" r="4.5"/><path d="M966 359.5 H977 M971.5 354 V365"/></g><path d="M1001 360 V357 a1.2 1.2 0 0 1 2.4 0 V355 a1.2 1.2 0 0 1 2.4 0 V356 a1.2 1.2 0 0 1 2.4 0 V358 a1.2 1.2 0 0 1 2.4 0 V364 q0 5 -5 5 h-1 q-3 0 -5 -4 l-2.5 -4 a1.2 1.2 0 0 1 2 -1.3Z" fill="#d0d0d0"/><path d="M1011 355 L1016 360.5 L1011 366" stroke="#d0d0d0" stroke-width="1.5" fill="none"/><path d="M1003 352 q3 -2 6 0" stroke="#d0d0d0" stroke-width="1.3" fill="none"/></svg>
<div class="a" style="left:1030px;top:347px;width:26px;height:26px;background:#474747;border-radius:4px"></div>
<svg style="left:0;top:0" width="1" height="1"><defs><pattern id="hatch" width="3" height="3" patternUnits="userSpaceOnUse" patternTransform="rotate(45)"><rect width="1.2" height="3" fill="#9a9a9a"/></pattern></defs><rect x="1034.5" y="351.5" width="17" height="17" fill="url(#hatch)"/><rect x="1038" y="355" width="10" height="10" fill="#474747" stroke="#d8d8d8" stroke-width="1.8"/></svg>
<div class="a" style="left:1065px;top:347px;width:110px;height:26px;background:#383838;border-radius:4px"></div>
<div class="a" style="left:1086px;top:348.5px;width:70px;height:23px;background:#272727;"></div>
<div class="t" style="left:1099px;top:353.5px;font-size:14.5px;color:#e0e0e0;transform:scaleX(0.92);transform-origin:0 0">22%</div>
<svg style="left:0;top:0" width="1" height="1"><g stroke="#c0c0c0" stroke-width="1.2" fill="none"><path d="M1070 355 L1074 351.5 L1078 355"/><path d="M1070 365 L1074 368.5 L1078 365"/><path d="M1160 357.5 L1164.5 361.5 L1169 357.5"/></g></svg>
<div class="a" style="left:0px;top:384px;width:1185px;height:516px;background:#242424;"></div>
<div class="a" style="left:116px;top:385px;width:923px;height:515px;background:#ffffff;"></div>
<div class="a" style="left:116px;top:385px;width:923px;height:515px;overflow:hidden">
<svg style="left:0;top:0" width="923" height="515" viewBox="116 385 923 515">
<defs>
<linearGradient id="lg1" x1="0.1" y1="0.1" x2="0.9" y2="0.95"><stop offset="0" stop-color="#f4e838"/><stop offset="0.45" stop-color="#d8e640"/><stop offset="1" stop-color="#52d6b0"/></linearGradient>
<linearGradient id="lg2" x1="0" y1="0" x2="1" y2="0"><stop offset="0" stop-color="#d848d8"/><stop offset="0.45" stop-color="#f070a0"/><stop offset="1" stop-color="#f08a50"/></linearGradient>
<linearGradient id="url" x1="0" y1="0" x2="1" y2="0"><stop offset="0" stop-color="#f2b126"/><stop offset="0.6" stop-color="#ee8a1a"/><stop offset="1" stop-color="#e4601a"/></linearGradient>
<filter id="sh" x="-10%" y="-30%" width="120%" height="160%"><feGaussianBlur stdDeviation="0.8"/></filter>
</defs>
<g id="logo"><circle cx="168" cy="447.5" r="39.5" fill="url(#lg1)" stroke="#10485a" stroke-width="2.3"/>
<g stroke="#3a5a78" stroke-width="0.9" fill="none" stroke-dasharray="1.5 1.5">
<path d="M131 400 q-12 14 -10 40 q2 16 8 26"/><path d="M126 406 q-8 18 -4 44"/><path d="M136 404 q-8 16 -6 36"/>
</g>
<path d="M133 432 Q127 408 158.5 393 Q159 420 141 431Z" fill="#1ab4b8"/>
<circle cx="140.5" cy="417" r="7.3" fill="#e8901e"/><circle cx="140" cy="417" r="3.8" fill="#1a3ab8"/>
<path d="M140 431 Q150 425 170 420 Q180 418 186 426" stroke="#4a5a20" stroke-width="0.8" fill="none" stroke-dasharray="1.2 1.2"/>
<path d="M162.5 412 L168 407 L171 416 L166 421Z" fill="#2a2e70"/>
<path d="M130 451 Q142 438 168 434 L160 450 Q145 453 130 451Z" fill="#9a58d8" opacity="0.85"/>
<path d="M147 460 Q156 451 172 454 L175 466 Q158 468 147 460Z" fill="#e066c8" opacity="0.85"/>
<path d="M147 447 Q153 440 162 441 L176 439 Q182 436 186 431 L190 430 L193 432 L198 439 L195 442 L190 439 L186 443 L184 450 L190 455 L195 463 L192 465 L186 458 L180 455 L176 456 L180 462 L175 468 L172 466 L174 461 L168 456 L162 455 L155 462 L151 461 L157 452 Q152 450 147 447Z" fill="#1b2466"/>
<text x="119" y="483" font-family="Liberation Sans" font-weight="bold" font-size="17" textLength="86" lengthAdjust="spacingAndGlyphs" fill="#5a1a7a" filter="url(#sh)" transform="translate(1,1.2)">ANIMATION</text>
<text x="119" y="483" font-family="Liberation Sans" font-weight="bold" font-size="17" textLength="86" lengthAdjust="spacingAndGlyphs" fill="url(#lg2)">ANIMATION</text>
<path d="M117 488 Q122 480 130 481" stroke="#d94ad8" stroke-width="3" fill="none"/>
<text x="166" y="490.5" text-anchor="middle" font-family="Liberation Sans" font-weight="bold" font-size="9" fill="#e87ab8" stroke="#7a2a8a" stroke-width="0.3">KI</text>
<text x="146" y="500.5" font-family="Liberation Sans" font-weight="bold" font-size="11.5" textLength="38" lengthAdjust="spacingAndGlyphs" fill="#6a1a9a" filter="url(#sh)" transform="translate(0.8,1)">DUNIYA</text>
<text x="146" y="500.5" font-family="Liberation Sans" font-weight="bold" font-size="11.5" textLength="38" lengthAdjust="spacingAndGlyphs" fill="#c844e8">DUNIYA</text></g>
</svg>
<svg style="left:0;top:0" width="923" height="515" viewBox="116 385 923 515">
<g stroke="#9a5533" stroke-width="0.8" stroke-linejoin="round">
<!-- legs -->
<path d="M539.2 786 L540.3 824 Q537 832 539.2 841 Q544 846 556.7 849 Q568 852 578 853 Q586 852 590 849 Q594.5 846.5 593.8 843.5 Q592 841 589 840.5 Q582 838 575.3 834 Q566 828 561.3 822 L560.2 786Z" fill="#eda575"/>
<path d="M588.1 778 L589.3 817.3 Q586.5 822 588.1 826 Q589 831 590.5 831.3 Q598 836 608 836 L631.3 838.3 Q637 837 637.1 833.6 Q638 830 636 829 Q630 827 622 825.4 Q614 822 609.1 817.3 L608 778Z" fill="#eda575"/>
<g fill="#f4f0ea" stroke="#8a5030" stroke-width="0.5"><ellipse cx="591" cy="844" rx="2.4" ry="2"/><ellipse cx="587" cy="848.5" rx="1.7" ry="1.4"/><ellipse cx="583" cy="850.5" rx="1.5" ry="1.3"/><ellipse cx="579" cy="851.5" rx="1.3" ry="1.1"/><ellipse cx="633.5" cy="834" rx="2.5" ry="1.8"/></g>
<path d="M543.5 826 Q544 834 547 838 M596 818 Q597 825 601 828" stroke="#9a5533" stroke-width="0.6" fill="none"/>
<!-- arms -->
<path d="M543 488.4 Q530 491 521.9 503.2 Q516 518 516.6 532.7 Q515 550 515.5 564.4 Q516 580 517.7 589.7 Q520 600 522.9 610.8 Q525 620 525 627.7 Q525.5 634 526.1 640.3 Q526.5 650 528.2 657.2 Q530 661 533.5 660.4 Q536 657 535.6 648.8 Q538 649 539.8 646.7 Q540 640 537.7 634 L535.6 627.7 L545 600 L545 500Z" fill="#eda575"/>
<path d="M620 500 L627.5 503.2 Q631 504 632.7 506.4 Q635 518 635.9 532.7 Q637 555 638 575 Q640 592 642.2 606.6 Q643 620 643.3 631.9 Q644 642 645.4 653 Q644 657 641.2 656.2 Q636 653 632.7 648.8 Q630 645 631.7 642.4 Q633 638 635.9 636.1 Q631 620 627.5 606.6 Q622 590 620 575Z" fill="#eda575"/>
<!-- neck -->
<path d="M563 470 L606 470 L604 505 L581.5 526 L560 505Z" fill="#eda575"/>
</g>
<!-- pants -->
<path d="M526.4 655 L622.3 655 Q621.5 680 621.4 698.3 Q621 725 620.6 746.6 Q620 765 618.2 772.4 Q615 779 610.2 781.2 Q604 783 597.3 782 Q589 781 584.4 777.2 Q582 772 581.2 766 Q578 755 575.6 743.4 Q577 752 576.4 761.1 Q576 772 573.1 778.8 Q566 785 558.6 786 Q550 785 544.2 782 Q539 779 536.1 774 Q533 768 532.9 762.7 Q531 750 530.5 738.6 Q529 718 528 698.3 Q527 680 526.4 655Z" fill="#2a2a2a" stroke="#101010" stroke-width="0.8"/>
<g stroke="#050505" stroke-width="1.2" fill="none" stroke-linecap="round" stroke-linejoin="round">
<path d="M552.2 664.5 Q550 680 546.6 698.3 Q543 715 540.1 730.5 Q537 740 536.1 746.6 Q536 752 539.3 756.3"/>
<path d="M562.7 665.3 Q561 690 558.6 706.4 Q556 730 552.2 746.6 Q549 760 545.8 766 Q541 770 537.7 769.2 M545.8 766 Q545 772 544.2 774.8"/>
<path d="M574.8 665.3 Q574 690 572.3 706.4 Q571 722 569.1 735.3 Q571 739 574.8 740.2 Q580 743 584.4 746.6 Q588 750 590.9 753.1"/>
<path d="M582 665 Q581 695 581.2 722.5 Q582 735 582.8 745"/>
<path d="M589.2 665 Q590 695 590.9 722.5 Q591.5 740 592.5 753.1"/>
<path d="M593.3 665 Q594 690 594 714.4 Q595 730 595.7 743.4 Q598 752 602.1 756.3"/>
</g>
<!-- vest -->
<path d="M544 488.4 L563 488 Q568 505 581.5 524.3 Q594 510 596.9 507.4 Q599 500 600 488.4 L604 489 Q618 496 626.4 503.2 Q626 518 625.4 532.7 Q623 550 621.1 570.7 Q621 590 623.2 606.6 Q626 620 629.6 634 Q631 638 631.7 640.3 Q628 646 623.2 648.8 Q612 654 601.1 657.2 Q590 661 580 662 Q568 661 557.7 659.3 Q545 657 532.4 655.1 Q525 652 520.8 648.8 Q523 647 524 646.7 Q530 625 534.5 606.6 Q536 585 536.6 564.4 Q537 545 538.8 534.9 Q542 528 543 522.2 Q544 505 544 488.4Z" fill="#8a904a" stroke="#6a6c30" stroke-width="0.8"/>
<rect x="580.5" y="524" width="3" height="138" fill="#66702e"/>
<path d="M524 630 Q525.5 634 526.1 640.3 Q526.5 650 528.2 657.2 Q530 661 533.5 660.4 Q536 657 535.6 648.8 Q538 649 539.8 646.7 Q540 640 537.7 634 L535.6 627.7Z" fill="#eda575" stroke="#9a5533" stroke-width="0.8"/>
<path d="M530 645 L531 656 M533 644 L534 654" stroke="#9a5533" stroke-width="0.6"/>
<path d="M600 537 L622.2 539 L621.1 558 L611.6 561.2 L601.1 558Z" fill="#6b7433" stroke="#5d6428" stroke-width="0.6"/>
<path d="M563 488 Q568 505 581.5 524.3 Q594 510 596.9 507.4 Q599 500 600 488.4" fill="none" stroke="#7a5a2a" stroke-width="0.9"/>
<!-- head -->
<g stroke="#9a5533" stroke-width="0.8">
<ellipse cx="552.5" cy="451" rx="7" ry="10.5" fill="#eda575"/><path d="M556 445 Q550 444 550 451 Q551 456 555 458" fill="none"/>
<path d="M562 410 Q585 404 610 416 Q611.5 428 611 435.7 Q611 448 610.3 459.7 Q609 470 607.7 475.7 Q605 482 601.7 486.3 Q597 491 592.3 491.7 L584.3 491.7 Q574 488 567 481 Q562 474 561 465 Q559.5 458 559.7 451.7Z" fill="#eda575"/>
</g>
<path d="M545 418.3 Q545 408 548.3 405 Q553 401 561.7 402.3 Q567 396 575 394.3 Q586 393 595 395 Q604 399 609.7 406.3 Q614 411 619.7 413 Q617 416 615 416.3 Q617 420 617 423.7 Q617 430 615 434.3 L611 435.7 Q610 428 609 423.7 Q603 419 595 417 Q585 414 575 413.7 Q569 414 567 415 Q565 420 565 425 Q563 432 561.7 438.3 Q562 446 562.3 451.7 L558.3 452.3 Q557 446 555 441 Q551 438 548.3 435.7 Q545 428 545 418.3Z" fill="#101010"/>
<!-- eyes -->
<path d="M570.5 447.5 Q573 440.5 580 440.5 Q586.5 441 587.5 447 Q585 453.5 579 453.5 Q573 453 570.5 447.5Z" fill="#fff" stroke="#2a1c14" stroke-width="1.1"/>
<path d="M595.5 446.5 Q597 440 603 440 Q609.5 440.5 610 446.5 Q608.5 452.5 603 452.5 Q597.5 452 595.5 446.5Z" fill="#fff" stroke="#2a1c14" stroke-width="1.1"/>
<circle cx="581.3" cy="447" r="4.9" fill="#55301f"/><circle cx="603.8" cy="446.5" r="4.7" fill="#55301f"/>
<circle cx="581.3" cy="447" r="2.2" fill="#0d0d0d"/><circle cx="603.8" cy="446.5" r="2.2" fill="#0d0d0d"/>
<circle cx="580" cy="445.6" r="0.9" fill="#fff"/><circle cx="602.5" cy="445.2" r="0.9" fill="#fff"/>
<path d="M570 446 Q573 440 580 440 Q586 440.5 588 446" stroke="#1a120c" stroke-width="1.8" fill="none"/>
<path d="M595 445.5 Q597 439.5 603 439.5 Q609 440 610.5 445.5" stroke="#1a120c" stroke-width="1.8" fill="none"/>
<path d="M568.3 441 Q574 434.5 585.7 436.5" stroke="#151515" stroke-width="2.6" fill="none" stroke-linecap="round"/>
<path d="M595.7 436.3 Q603 434 609.7 438" stroke="#151515" stroke-width="2.6" fill="none" stroke-linecap="round"/>
<path d="M588 452 Q589 458 587.7 461 Q589 466 593.7 466.3" stroke="#9a5533" stroke-width="0.8" fill="none"/>
<path d="M585.7 474.3 Q592 474 600.3 474.3 Q597 480 592.3 480 Q588 480 585.7 474.3Z" fill="#8e2c1e"/>
<path d="M576.5 478 Q579 471 584.3 469.3 Q588 467.8 592.3 469 Q596 467.8 600.3 469.3 Q605 471 607 478 Q603 475.5 599 475 Q595 474.5 592 475 Q588 474.5 584.3 475 Q580 475.5 576.5 478Z" fill="#4d3a2c" stroke="#3a2a20" stroke-width="0.5"/>
</svg>
<div class="wm" style="left:158.7px;top:36.3px">Animation Ki Duniya</div>
<div class="wm" style="left:42.0px;top:131.6px">Animation Ki Duniya</div>
<div class="wm" style="left:167.0px;top:146.4px">Animation Ki Duniya</div>
<div class="wm" style="left:337.8px;top:146.4px">Animation Ki Duniya</div>
<div class="wm" style="left:-36.3px;top:215.5px">Animation Ki Duniya</div>
<div class="wm" style="left:153.8px;top:228.5px">Animation Ki Duniya</div>
<div class="wm" style="left:385.5px;top:44.5px">Animation Ki Duniya</div>
<div class="wm" style="left:273.8px;top:271.6px">Animation Ki Duniya</div>
<div class="wm" style="left:-56.0px;top:311.0px">Animation Ki Duniya</div>
<div class="wm" style="left:-23.1px;top:381.8px">Animation Ki Duniya</div>
<div class="wm" style="left:198.2px;top:409.6px">Animation Ki Duniya</div>
<div class="wm" style="left:-23.1px;top:490.2px">Animation Ki Duniya</div>
<div class="wm" style="left:167.0px;top:508.0px">Animation Ki Duniya</div>
<div class="wm" style="left:530.6px;top:0.0px">Animation Ki Duniya</div>
<div class="wm" style="left:693.0px;top:0.0px">Animation Ki Duniya</div>
<div class="wm" style="left:838.9px;top:0.0px">Animation Ki Duniya</div>
<div class="wm" style="left:515.7px;top:63.2px">Animation Ki Duniya</div>
<div class="wm" style="left:659.9px;top:63.2px">Animation Ki Duniya</div>
<div class="wm" style="left:847.1px;top:63.2px">Animation Ki Duniya</div>
<div class="wm" style="left:683.0px;top:134.5px">Animation Ki Duniya</div>
<div class="wm" style="left:800.7px;top:162.7px">Animation Ki Duniya</div>
<div class="wm" style="left:623.4px;top:207.4px">Animation Ki Duniya</div>
<div class="wm" style="left:688.0px;top:271.8px">Animation Ki Duniya</div>
<div class="wm" style="left:857.0px;top:239.0px">Animation Ki Duniya</div>
<div class="wm" style="left:429.5px;top:175.6px">Animation Ki Duniya</div>
<div class="wm" style="left:409.6px;top:279.6px">Animation Ki Duniya</div>
<div class="wm" style="left:436.0px;top:342.6px">Animation Ki Duniya</div>
<div class="wm" style="left:608.5px;top:392.8px">Animation Ki Duniya</div>
<div class="wm" style="left:819.0px;top:348.0px">Animation Ki Duniya</div>
<div class="wm" style="left:688.0px;top:442.5px">Animation Ki Duniya</div>
<div class="wm" style="left:800.7px;top:489.0px">Animation Ki Duniya</div>
<svg style="left:0;top:0" width="923" height="515" viewBox="116 385 923 515"><defs><clipPath id="pc"><rect x="500" y="664.5" width="200" height="200"/></clipPath></defs><g clip-path="url(#pc)"><!-- pants -->
<path d="M526.4 655 L622.3 655 Q621.5 680 621.4 698.3 Q621 725 620.6 746.6 Q620 765 618.2 772.4 Q615 779 610.2 781.2 Q604 783 597.3 782 Q589 781 584.4 777.2 Q582 772 581.2 766 Q578 755 575.6 743.4 Q577 752 576.4 761.1 Q576 772 573.1 778.8 Q566 785 558.6 786 Q550 785 544.2 782 Q539 779 536.1 774 Q533 768 532.9 762.7 Q531 750 530.5 738.6 Q529 718 528 698.3 Q527 680 526.4 655Z" fill="#2a2a2a" stroke="#101010" stroke-width="0.8"/>
<g stroke="#050505" stroke-width="1.2" fill="none" stroke-linecap="round" stroke-linejoin="round">
<path d="M552.2 664.5 Q550 680 546.6 698.3 Q543 715 540.1 730.5 Q537 740 536.1 746.6 Q536 752 539.3 756.3"/>
<path d="M562.7 665.3 Q561 690 558.6 706.4 Q556 730 552.2 746.6 Q549 760 545.8 766 Q541 770 537.7 769.2 M545.8 766 Q545 772 544.2 774.8"/>
<path d="M574.8 665.3 Q574 690 572.3 706.4 Q571 722 569.1 735.3 Q571 739 574.8 740.2 Q580 743 584.4 746.6 Q588 750 590.9 753.1"/>
<path d="M582 665 Q581 695 581.2 722.5 Q582 735 582.8 745"/>
<path d="M589.2 665 Q590 695 590.9 722.5 Q591.5 740 592.5 753.1"/>
<path d="M593.3 665 Q594 690 594 714.4 Q595 730 595.7 743.4 Q598 752 602.1 756.3"/>
</g>
</g></svg>
<svg style="left:0;top:0" width="923" height="515" viewBox="116 385 923 515">
<use href="#logo" transform="translate(485 871) scale(0.445) translate(-168 -449)"/>
</svg>
<svg style="left:0;top:0" width="923" height="515" viewBox="116 385 923 515"><text x="509" y="880.5" font-family="Liberation Sans" font-weight="bold" font-style="italic" font-size="19.5" textLength="227" lengthAdjust="spacingAndGlyphs" fill="url(#url)" stroke="url(#url)" stroke-width="0.7">www.animationkiduniya.com</text></svg>
</div>
<div class="a" style="left:1188px;top:44px;width:212px;height:856px;background:#323232;"></div>
<div class="a" style="left:1188px;top:44px;width:212px;height:12px;background:#2f2f2f;"></div>
<div class="a" style="left:1188px;top:56px;width:212px;height:1px;background:#262626;"></div>
<div class="a" style="left:1233px;top:57px;width:63px;height:19px;background:#2e2e2e;"></div>
<div class="a" style="left:1296px;top:57px;width:104px;height:19px;background:#2b2b2b;"></div>
<div class="a" style="left:1188px;top:76px;width:212px;height:1px;background:#2c2c2c;"></div>
<div class="t" style="left:1196px;top:62.5px;font-size:11.5px;color:#e8e8e8;font-weight:bold;transform:scaleX(0.87);transform-origin:0 0">Color</div>
<div class="t" style="left:1240px;top:62.5px;font-size:11.5px;color:#7a7a7a;font-weight:bold;transform:scaleX(0.89);transform-origin:0 0">Swatches</div>
<div class="a" style="left:1209px;top:96px;width:34.5px;height:24px;background:#4d4d4d;border-radius:4px"></div>
<div class="a" style="left:1245.5px;top:97px;width:30px;height:22px;background:#8c8d49;border-radius:4px"></div>
<div class="a" style="left:1245.5px;top:121.5px;width:30px;height:21px;background:#5b0000;border-radius:3px"></div>
<svg style="left:0;top:0" width="1" height="1"><path d="M1217.5 108 L1226 99.5 L1234.5 108 L1226 116.5Z" fill="#d0d0d0"/><path d="M1220 99 L1225 104" stroke="#d0d0d0" stroke-width="1.6"/><path d="M1234 107 q2 3 1.5 6" stroke="#d0d0d0" stroke-width="2" fill="none"/><path d="M1219 141 L1220.5 135 L1231 124.5 L1235 128.5 L1224.5 139Z" fill="#c8c8c8"/><path d="M1220.8 134.8 L1225 139" stroke="#323232" stroke-width="0.8"/><rect x="1222" y="148.5" width="9" height="9" fill="#111" stroke="#ddd" stroke-width="1"/><rect x="1219.5" y="146.5" width="6.5" height="6.5" fill="#fff" stroke="#111" stroke-width="1"/><rect x="1239" y="147" width="12.5" height="12.5" fill="#f2f2f2"/><path d="M1239.5 159 L1251 147.5" stroke="#e03030" stroke-width="1"/><rect x="1257" y="147" width="5" height="5" fill="#111" stroke="#ddd" stroke-width="1"/><rect x="1257" y="154" width="5" height="5" fill="#eee"/><path d="M1265 149 q4 0 4 3.5 q0 3.5 -4 3.5" stroke="#ddd" stroke-width="1.3" fill="none"/><path d="M1264 147 l2 2 l-2 2Z M1266 155 l-2 2 l2 2Z" fill="#ddd"/></svg>
<div class="a" style="left:1290px;top:95.5px;width:115px;height:33.5px;background:#2e2e2e;border:1px solid #404040;border-radius:5px"></div>
<div class="t" style="left:1302px;top:106.5px;font-size:14.5px;color:#dadada;transform:scaleX(0.93);transform-origin:0 0">Solid color</div>
<svg style="left:0;top:0" width="1" height="1"><path d="M1396 110 L1400 114 L1404 110" stroke="#ccc" stroke-width="1.6" fill="none"/></svg>
<div class="a" style="left:1200px;top:199px;width:172px;height:171px;background:#111;"></div>
<div class="a" style="left:1202.5px;top:201.5px;width:167.5px;height:166.5px;background:linear-gradient(to bottom,rgba(0,0,0,0),#000),linear-gradient(to right,#fff,#ffff00)"></div>
<svg style="left:0;top:0" width="1" height="1"><circle cx="1282.5" cy="275.2" r="5.5" fill="none" stroke="#3a3510" stroke-width="1.2"/></svg>
<div class="a" style="left:1380px;top:199px;width:13.5px;height:171px;background:#1a1a1a;"></div>
<div class="a" style="left:1381.5px;top:201px;width:10px;height:168px;background:linear-gradient(to bottom,#ff0000,#ff00ff 16.7%,#0000ff 33.3%,#00ffff 50%,#00ff00 66.7%,#ffff00 83.3%,#ff0000)"></div>
<svg style="left:0;top:0" width="1" height="1"><path d="M1375.5 333.5 L1380.5 338.7 L1375.5 344Z" fill="#262626" stroke="#1a1a1a" stroke-width="0.8"/><path d="M1399.5 333.5 L1394.5 338.7 L1399.5 344Z" fill="#262626" stroke="#1a1a1a" stroke-width="0.8"/></svg>
<div class="t" style="left:1242px;top:388.5px;font-size:12px;color:#bcbcbc;">#</div>
<div class="a" style="left:1253.5px;top:376px;width:82px;height:34px;background:#2a2a2a;border:1px solid #3c3c3c;border-radius:5px"></div>
<div class="t" style="left:1268.5px;top:386px;font-size:15px;color:#dedede;transform:scaleX(0.91);transform-origin:0 0">8C8D49</div>
<div class="a" style="left:1202px;top:420.5px;width:210px;height:44px;background:#111;"></div>
<div class="a" style="left:1204px;top:422px;width:208px;height:40.5px;background:#8c8d49;"></div>
<div class="a" style="left:1204px;top:441.5px;width:208px;height:1px;background:#858746;"></div>
<div class="a" style="left:1203px;top:473px;width:155px;height:34px;background:#2e2e2e;border:1px solid #3c3c3c;border-radius:5px"></div>
<div class="t" style="left:1226.5px;top:484.5px;font-size:14.5px;color:#dcdcdc;transform:scaleX(0.92);transform-origin:0 0">Add To Swatches</div>
<div class="a" style="left:1188px;top:519px;width:212px;height:4px;background:#232323;"></div>
<div class="a" style="left:1188px;top:523px;width:212px;height:17px;background:#2b2b2b;"></div>
<div class="a" style="left:1270px;top:523px;width:70px;height:17px;background:#323232;"></div>
<div class="a" style="left:1231px;top:523px;width:1px;height:17px;background:#282828;"></div>
<div class="t" style="left:1196px;top:527px;font-size:11.5px;color:#7f7f7f;font-weight:bold;transform:scaleX(0.86);transform-origin:0 0">Align</div>
<div class="t" style="left:1240px;top:527px;font-size:11.5px;color:#7f7f7f;font-weight:bold">Info</div>
<div class="t" style="left:1278px;top:527px;font-size:11.5px;color:#ececec;font-weight:bold;transform:scaleX(0.94);transform-origin:0 0">Transform</div>
<svg style="left:0;top:0" width="1" height="1"><g fill="#d4d4d4"><path d="M1198 555 L1202.5 551 V553.8 H1209 V551 L1213.5 555 L1209 559 V556.2 H1202.5 V559Z"/><path d="M1280.2 547.5 L1284 551.5 H1281.2 V559 H1284 L1280.2 563 L1276.4 559 H1279.2 V551.5 H1276.4Z"/></g><g fill="#7a7a7a"><rect x="1218.5" y="555.5" width="11.5" height="1"/><rect x="1293.5" y="555.5" width="11.5" height="1"/></g><g stroke="#474747" stroke-width="1.6" fill="none"><path d="M1360 552 h8 a4 4 0 0 1 0 8 h-8 a4 4 0 0 1 0 -8Z"/></g><path d="M1393 557 L1398 552 V562Z" fill="#444"/></svg>
<div class="t" style="left:1236.5px;top:550.5px;font-size:12.5px;color:#7a7a7a;">%</div>
<div class="t" style="left:1311.5px;top:550.5px;font-size:12.5px;color:#7a7a7a;">%</div>
<div class="a" style="left:1188px;top:570px;width:212px;height:2px;background:#474747;"></div>
<svg style="left:0;top:0" width="1" height="1"><circle cx="1207.7" cy="585" r="7" fill="#5c5c5c"/><circle cx="1207.7" cy="585" r="1.3" fill="#222"/><circle cx="1207.7" cy="621.7" r="6.5" fill="none" stroke="#5c5c5c" stroke-width="1.6"/><path d="M1229 606.5 H1244.5 M1229.5 606 L1238 596.5" stroke="#c8c8c8" stroke-width="1.6" fill="none"/><path d="M1235 606 A6 6 0 0 0 1233 600" stroke="#c8c8c8" stroke-width="1.2" fill="none"/><path d="M1230.5 643 L1236 633 H1244 L1238.5 643Z" fill="none" stroke="#c8c8c8" stroke-width="1.3"/><path d="M1308.5 632.5 L1318.5 639.5 V645.5 L1308.5 638.5Z" fill="none" stroke="#c8c8c8" stroke-width="1.3"/><g fill="#7a7a7a"><rect x="1251" y="640.5" width="11" height="1"/><rect x="1324" y="640.5" width="11.5" height="1"/></g><g stroke="#7a7a7a" stroke-width="0.9" fill="none"><circle cx="1271" cy="603" r="1.6"/><circle cx="1271" cy="638.5" r="1.6"/><circle cx="1345" cy="638.5" r="1.6"/></g></svg>
<div class="t" style="left:1228px;top:579px;font-size:13.5px;color:#747474;transform:scaleX(0.9);transform-origin:0 0">Rotate</div>
<div class="t" style="left:1248.5px;top:597px;font-size:13px;color:#6c6c6c;transform:scaleX(0.85);transform-origin:0 0">0.0</div>
<div class="t" style="left:1228px;top:616.5px;font-size:13.5px;color:#747474;transform:scaleX(0.9);transform-origin:0 0">Skew</div>
<div class="a" style="left:1188px;top:653.5px;width:212px;height:2px;background:#474747;"></div>
<div class="t" style="left:1201.5px;top:665px;font-size:13.5px;color:#c8c8c8;transform:scaleX(0.9);transform-origin:0 0">3D Rotation</div>
<div class="t" style="left:1201.5px;top:686px;font-size:12.5px;color:#c8c8c8;transform:scaleX(0.9);transform-origin:0 0">X:</div>
<div class="t" style="left:1221.0px;top:686px;font-size:12.5px;color:#6c6c6c;transform:scaleX(0.88);transform-origin:0 0">0.0</div>
<svg style="left:0;top:0" width="1" height="1"><circle cx="1245.0" cy="691.5" r="1.6" fill="none" stroke="#777" stroke-width="0.9"/></svg>
<div class="t" style="left:1277px;top:686px;font-size:12.5px;color:#c8c8c8;transform:scaleX(0.9);transform-origin:0 0">Y:</div>
<div class="t" style="left:1296.5px;top:686px;font-size:12.5px;color:#6c6c6c;transform:scaleX(0.88);transform-origin:0 0">0.0</div>
<svg style="left:0;top:0" width="1" height="1"><circle cx="1320.5" cy="691.5" r="1.6" fill="none" stroke="#777" stroke-width="0.9"/></svg>
<div class="t" style="left:1351.5px;top:686px;font-size:12.5px;color:#c8c8c8;transform:scaleX(0.9);transform-origin:0 0">Z:</div>
<div class="t" style="left:1371.0px;top:686px;font-size:12.5px;color:#6c6c6c;transform:scaleX(0.88);transform-origin:0 0">0.0</div>
<svg style="left:0;top:0" width="1" height="1"><circle cx="1395.0" cy="691.5" r="1.6" fill="none" stroke="#777" stroke-width="0.9"/></svg>
<div class="t" style="left:1201.5px;top:712px;font-size:13.5px;color:#c8c8c8;transform:scaleX(0.9);transform-origin:0 0">3D Center point</div>
<div class="t" style="left:1201.5px;top:733px;font-size:12.5px;color:#c8c8c8;transform:scaleX(0.9);transform-origin:0 0">X:</div>
<div class="t" style="left:1221.0px;top:733px;font-size:12.5px;color:#6c6c6c;transform:scaleX(0.88);transform-origin:0 0">271.1</div>
<div class="t" style="left:1277px;top:733px;font-size:12.5px;color:#c8c8c8;transform:scaleX(0.9);transform-origin:0 0">Y:</div>
<div class="t" style="left:1296.5px;top:733px;font-size:12.5px;color:#6c6c6c;transform:scaleX(0.88);transform-origin:0 0">-281.3</div>
<div class="t" style="left:1351.5px;top:733px;font-size:12.5px;color:#c8c8c8;transform:scaleX(0.9);transform-origin:0 0">Z:</div>
<div class="t" style="left:1371.0px;top:733px;font-size:12.5px;color:#6c6c6c;transform:scaleX(0.88);transform-origin:0 0">0.0</div>
<div class="a" style="left:1188px;top:757px;width:212px;height:2px;background:#474747;"></div>
<div class="a" style="left:1188px;top:840px;width:212px;height:2px;background:#474747;"></div>
<div class="a" style="left:1188px;top:842px;width:212px;height:21px;background:#2f2f2f;"></div>
<svg style="left:0;top:0" width="1" height="1"><g fill="#3c3c3c"><path d="M1201 846 L1206 850 L1201 854Z M1213 846 L1208 850 L1213 854Z"/><path d="M1230 845 H1240 L1235 851Z M1230 860 H1240 L1235 853Z"/></g></svg>
<div class="a" style="left:1188px;top:863px;width:212px;height:2px;background:#1f1f1f;"></div>
<div class="a" style="left:1188px;top:865px;width:212px;height:22px;background:#2b2b2b;"></div>
<div class="a" style="left:1188px;top:865px;width:52px;height:22px;background:#323232;"></div>
<div class="t" style="left:1196px;top:870.5px;font-size:11.5px;color:#ececec;font-weight:bold;transform:scaleX(0.88);transform-origin:0 0">Library</div>
<div class="t" style="left:1248.5px;top:870.5px;font-size:11.5px;color:#777;font-weight:bold;transform:scaleX(0.88);transform-origin:0 0">Motion Presets</div>
<div class="a" style="left:1188px;top:887px;width:212px;height:2px;background:#262626;"></div>
<div class="a" style="left:1188px;top:889px;width:212px;height:11px;background:#323232;"></div>
<div class="t" style="left:1196px;top:893px;font-size:12.5px;color:#e0e0e0;font-weight:bold;transform:scaleX(0.87);transform-origin:0 0">CC Libraries</div></body></html>
